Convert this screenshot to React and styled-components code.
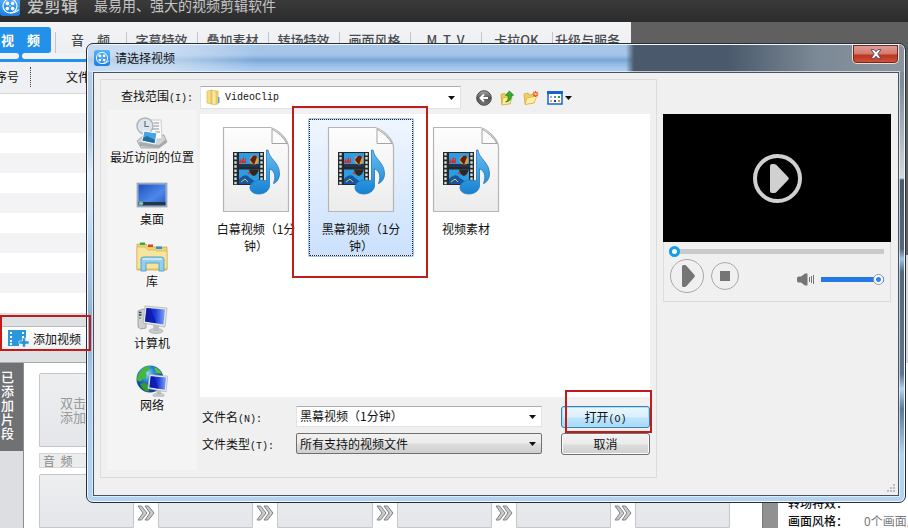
import React from "react";
import styled, { createGlobalStyle, css } from "styled-components";

const cjk = '"Noto Sans CJK SC", sans-serif';

const GlobalStyle = createGlobalStyle`
  *, *::before, *::after { box-sizing: border-box; }
  body { margin: 0; font-family: ${cjk}; font-size: 12px; color: #111; }
  button, input, select { font: inherit; color: inherit; margin: 0; padding: 0; }
  button { cursor: pointer; }
  svg { display: block; flex: none; }
`;

/* ---------- editor window ---------- */
const Editor = styled.div`
  position: relative;
  display: flex;
  flex-direction: column;
  height: 100vh;
  overflow: hidden;
  background: #fff;
`;
const Brand = styled.header`
  display: flex;
  align-items: flex-end;
  flex: none;
  height: 22px;
  padding-bottom: 6px;
  overflow: hidden;
  background: linear-gradient(#3a3a3a, #2b2b2b);
  color: #c4c4c4;
  line-height: 22px;
  white-space: nowrap;
`;
const BrandName = styled.strong`
  margin: 0 16px 0 7px;
  font-size: 17px;
  font-weight: 500;
`;
const Slogan = styled.span`font-size: 14px;`;
const Upper = styled.div`display: flex; flex: none;`;
const Library = styled.section`
  flex: 0 1 631px;
  min-width: 0;
  background: #eff0f3;
`;
const Stage = styled.div`
  flex: 1;
  background: linear-gradient(#606060 0 233px, #d8dade 233px);
`;
const TabBar = styled.nav`
  display: flex;
  height: 31px;
  padding-top: 5px;
  background: linear-gradient(#f3f4f6, #edeef1);
`;
const Tab = styled.button`
  flex: none;
  width: 71px;
  height: 26px;
  border: 0;
  background: linear-gradient(#c3c5c9, #c3c5c9) 0 5px / 1px 21px no-repeat;
  color: #4a4b4f;
  font-size: 13px;
  font-weight: 500;
  line-height: 26px;
  white-space: pre;
  text-align: center;
  ${(p) => p.$active && css`
    width: 51px;
    margin-right: 4px;
    padding-right: 10px;
    border-radius: 0 3px 3px 0;
    background: #2390ea;
    color: #fff;
    font-weight: 700;
  `}
`;
const TabStrip = styled.div`
  display: flex;
  gap: 3px;
  height: 9px;
  padding-bottom: 3px;
  background: #2390ea;
`;
const StripNotch = styled.i`
  flex: ${(p) => (p.$wide ? "1" : "0 0 19px")};
  border-radius: ${(p) => (p.$wide ? "4px 0 0 4px" : "0 4px 4px 0")};
  background: #f2f3f6;
`;
const ClipTable = styled.table`
  width: 100%;
  border-collapse: collapse;
  table-layout: fixed;
  background: #fff;
`;
const HeadCell = styled.th`
  width: ${(p) => (p.$first ? "31px" : "auto")};
  height: 31px;
  padding: 0 0 0 ${(p) => (p.$first ? "0" : "35px")};
  border-bottom: 1px solid #d4d6da;
  background: #eff0f3;
  font-weight: 400;
  text-align: left;
  text-indent: ${(p) => (p.$first ? "-5px" : "0")};
`;
const HeadText = styled.span`
  display: block;
  height: 20px;
  border-right: ${(p) => (p.$divider ? "1px dotted #444" : "0")};
  line-height: 20px;
`;
const ClipRow = styled.tr`
  height: 20px;
  background: ${(p) => (p.$odd ? "#f3f3f6" : "#fff")};
`;
const LibraryActions = styled.div`
  position: relative;
  height: 50px;
  padding: 13px 0 0 2px;
  border-bottom: 1px solid #a9abae;
  background: #dfe0e4;
`;
const AddVideo = styled.button`
  display: flex;
  align-items: center;
  gap: 4px;
  width: 90px;
  height: 25px;
  padding-left: 6px;
  border: 1px solid #b8babd;
  border-left: 0;
  background: linear-gradient(#fff, #f0f1f3);
  white-space: nowrap;
`;
const Lower = styled.div`display: flex; flex: 1; min-height: 0;`;
const SideTabs = styled.aside`
  width: 24px;
  flex: none;
  border-right: 1px solid #8d8e90;
  background: #dcdee2;
`;
const SideTab = styled.button`
  display: block;
  width: 23px;
  height: 88px;
  padding: 0 9px 4px 1px;
  border: 0;
  background: #707173;
  color: #fff;
  font-size: 13px;
  font-weight: 500;
  line-height: 14px;
  word-break: break-all;
`;
const Tray = styled.div`
  display: flex;
  flex-direction: column;
  flex: 0 1 738px;
  min-width: 0;
  padding: 10px 32px 0 15px;
`;
const slot = css`
  border: 1px solid #c4c6c9;
  border-radius: 2px 2px 0 0;
  background: linear-gradient(#eceef0, #e4e6e9);
`;
const ClipSlot = styled.div`
  ${slot}
  width: 95px;
  height: 74px;
  padding: 22px 0 0 20px;
  color: #999;
  font-size: 13px;
  line-height: 14px;
`;
const AudioLabel = styled.div`
  height: 15px;
  margin: 6px 0;
  padding-left: 3px;
  border: 1px solid #d6d6d6;
  background: #ececec;
  color: #888;
  line-height: 13px;
  white-space: pre;
`;
const AudioSlots = styled.div`display: flex; flex: 1; min-height: 0;`;
const AudioSlot = styled.div`${slot} flex: 1;`;
const Between = styled.div`
  display: flex;
  justify-content: center;
  flex: 0 0 24px;
  padding-top: 31px;
`;
const Splitter = styled.div`
  flex: 0 0 16px;
  border-left: 1px solid #777;
  background: #919191;
`;
const Info = styled.dl`
  display: grid;
  grid-template-columns: 76px 1fr;
  align-content: start;
  flex: 1;
  min-width: 0;
  margin: 0;
  padding: 131px 0 0 10px;
  line-height: 18px;
  white-space: nowrap;
`;
const InfoName = styled.dt`font-weight: 500;`;
const InfoValue = styled.dd`margin: 0; color: #777;`;

const Highlight = styled.span`
  position: absolute;
  z-index: 5;
  inset: ${(p) => p.$inset};
  width: ${(p) => p.$width || "auto"};
  border: 2px solid #c11b1b;
  pointer-events: none;
`;

/* ---------- dialog ---------- */
const Dialog = styled.div`
  position: absolute;
  z-index: 2;
  top: 43px;
  left: 86px;
  right: 2px;
  display: flex;
  flex-direction: column;
  padding: 0 6px 6px;
  border: 1px solid #23303a;
  border-radius: 7px;
  box-shadow: inset 0 0 0 1px #f2f8fc;
  background:
    linear-gradient(#8893a0, #7f8b97 40px, #d4d9dd 134px, #4c5b6c 136px, #566779 205px, #9cc3ec 215px, #54677c 228px, #60758c 330px, #b3d3f3 345px, #5c7896 365px, #b3d3f3 410px) right top / 8px 100% no-repeat,
    linear-gradient(#bcd2e8, #a8c6e6 90px, #e3eef8 130px, #b5d5f5 200px, #8eaed0 280px, #aacdf0 340px, #b2d3f4);
`;
const TitleBar = styled.header`
  display: flex;
  align-items: center;
  height: 27px;
  margin: 1px -5px 0;
  padding: 0 5px 1px 6px;
  border-radius: 5px 5px 0 0;
  background:
    linear-gradient(90deg, rgba(220,233,246,.6), rgba(225,236,248,.6) 80px, rgba(200,220,240,0) 170px, rgba(74,90,108,0) 538px, #4a5a6c 546px, #4a5a6c 640px, #7c8996 730px, #8b959f),
    linear-gradient(#a8c6e9, #a4c5e9 10px, #78a5d4 15px, #98bee6 20px, #b0d0f2);
`;
const Title = styled.h1`
  flex: 1;
  margin: 0 0 0 5px;
  padding-bottom: 2px;
  font-size: 12px;
  font-weight: 400;
`;
const CloseButton = styled.button`
  display: grid;
  place-items: center;
  align-self: flex-start;
  width: 47px;
  height: 19px;
  border: 1px solid #f1d9d5;
  border-top: 0;
  border-radius: 0 0 5px 5px;
  box-shadow: inset 0 0 0 1px #6d2a22;
  background: linear-gradient(#e1a198, #d4786b 9px, #b93521 10px, #d0563a);
`;
const Client = styled.div`
  display: flex;
  align-items: flex-start;
  gap: 6px;
  position: relative;
  padding: 6px 7px 17px 6px;
  border: 1px solid #46525e;
  background: #f0f0f0;
  box-shadow: 0 0 0 1px rgba(240, 247, 253, .7);
`;
const Browser = styled.form`
  display: grid;
  grid-template-columns: 90px minmax(0, 1fr);
  gap: 1px 3px;
  flex: 1;
  min-width: 0;
  padding: 6px 6px 7px;
  border: 1px solid #dcdcdc;
`;
const FieldLabel = styled.label`
  align-self: center;
  padding: ${(p) => (p.$end ? "0 4px 4px 0" : "0 0 2px 2px")};
  text-align: ${(p) => (p.$end ? "right" : "left")};
  white-space: nowrap;
`;
const Mono = styled.span`
  font-family: "Liberation Mono", monospace;
  font-size: 10px;
`;
const LookRow = styled.div`display: flex; align-items: center;`;
const Combo = styled.div`
  display: flex;
  align-items: center;
  gap: 4px;
  flex: ${(p) => (p.$look ? "0 1 261px" : "1")};
  min-width: 0;
  height: ${(p) => (p.$look ? "23px" : "21px")};
  padding: 0 5px 0 ${(p) => (p.$look ? "5px" : "3px")};
  border: 1px solid ${(p) => (p.$button ? "#707070" : "#dfe2e8")};
  border-top-color: ${(p) => (p.$button ? "#707070" : "#abadb3")};
  border-radius: ${(p) => (p.$button ? "2px" : "0")};
  background: ${(p) => (p.$button ? "linear-gradient(#f2f2f2, #ebebeb 9px, #dddddd 10px, #cfcfcf)" : "#fff")};
`;
const bareField = css`
  flex: 1;
  min-width: 0;
  height: 19px;
  border: 0;
  outline: 0;
  background: none;
  appearance: none;
`;
const ComboSelect = styled.select`
  ${bareField}
  ${(p) => p.$mono && css`font-family: "Liberation Mono", monospace; font-size: 10px;`}
`;
const ComboInput = styled.input`
  ${bareField}
  padding-bottom: 2px;
`;
const PlainButton = styled.button`
  display: flex;
  align-items: center;
  border: 0;
  background: none;
`;
const ViewTools = styled.div`
  display: flex;
  align-items: center;
  gap: 8px;
  margin-left: 15px;
`;
const ViewMode = styled(PlainButton)`gap: 2px;`;
const Places = styled.nav`
  display: flex;
  flex-direction: column;
  gap: 12px;
  padding: 7px 0 0;
  background: #f4f4f4;
`;
const Place = styled.button`
  display: flex;
  flex-direction: column;
  align-items: center;
  height: 50px;
  border: 0;
  background: none;
  line-height: 16px;
  white-space: nowrap;
`;
const FileArea = styled.div`padding: 4px 0 15px;`;
const FilePane = styled.div`
  display: flex;
  align-items: flex-start;
  gap: 1px;
  height: 283px;
  padding: 5px 4px;
  background: #fff;
`;
const FileItem = styled.button`
  position: relative;
  display: flex;
  flex-direction: column;
  align-items: center;
  gap: 7px;
  flex: none;
  width: 104px;
  height: 137px;
  padding: 6px 11px 0;
  border: 1px ${(p) => (p.$selected ? "dotted #222" : "solid transparent")};
  border-radius: ${(p) => (p.$selected ? "1px" : "0")};
  background: ${(p) => (p.$selected ? "linear-gradient(#eff6fe, #cbe1fc)" : "none")};
  box-shadow: ${(p) => (p.$selected ? "0 0 0 1px #9fc4ee" : "none")};
  line-height: 17px;
  text-align: center;
`;
const FormGrid = styled.div`
  display: grid;
  grid-template-columns: 96px minmax(0, 1fr) 89px;
  row-gap: 5px;
  margin-top: 9px;
`;
const FormCombo = styled(Combo)`margin-right: 19px;`;
const DialogButton = styled.button`
  position: relative;
  height: 22px;
  padding-bottom: 1px;
  border: 1px solid ${(p) => (p.$primary ? "#3c7fb1" : "#707070")};
  border-radius: 3px;
  box-shadow: inset 0 0 0 1px ${(p) => (p.$primary ? "#a8e0fa" : "#fbfbfb")};
  background: ${(p) => (p.$primary
    ? "linear-gradient(#eaf6fd, #d9f0fc 10px, #bee6fd 11px, #a7d9f5)"
    : "linear-gradient(#f2f2f2, #ebebeb 10px, #dddddd 11px, #cfcfcf)")};
`;
const Grip = styled.span`
  position: absolute;
  right: 2px;
  bottom: 2px;
`;

/* ---------- preview player ---------- */
const Player = styled.section`
  flex: 0 0 228px;
  margin-top: 35px;
  border: 1px solid #dcdcdc;
  border-top: 0;
`;
const Screen = styled.div`
  display: grid;
  place-items: center;
  height: 128px;
  margin: 0 -1px;
  background: #000;
`;
const SeekRow = styled.div`padding: 3px 6px 0 5px;`;
const Range = styled.input`
  display: block;
  appearance: none;
  width: 100%;
  height: 12px;
  background: linear-gradient(${(p) => p.$track}, ${(p) => p.$track}) center / 100% 5px no-repeat;
  border-radius: 3px;
  &::-webkit-slider-thumb {
    appearance: none;
    width: 11px;
    height: 11px;
    border: ${(p) => (p.$volume ? "1px solid #8e9aa6" : "3px solid #139ce8")};
    border-radius: 50%;
    background: ${(p) => (p.$volume ? "radial-gradient(#2b86ee 0 2px, #fff 3px)" : "#fff")};
  }
`;
const Controls = styled.div`
  display: flex;
  align-items: center;
  gap: 7px;
  padding: 2px 5px 8px 6px;
`;
const VolumeBox = styled.div`
  display: flex;
  align-items: center;
  gap: 6px;
  width: 87px;
  margin: 7px 1px 0 auto;
`;
const RoundButton = styled.button`
  display: grid;
  place-items: center;
  width: ${(p) => p.$size};
  height: ${(p) => p.$size};
  padding-left: ${(p) => p.$shift || "0"};
  border: ${(p) => p.$line || "1px solid #a8a8a8"};
  border-radius: 50%;
  background: none;
`;

/* ---------- drawings ---------- */
const ReelLogo = ({ size, id }) => (
  <svg width={size} height={size} viewBox="0 0 20 20" aria-hidden="true">
    <defs>
      <linearGradient id={id} x1="0" y1="0" x2="0" y2="1">
        <stop offset="0" stopColor="#58b4f6" /><stop offset="1" stopColor="#1c7de4" />
      </linearGradient>
    </defs>
    <rect width="20" height="20" rx="3" fill={`url(#${id})`} />
    <circle cx="10" cy="10" r="7" fill="none" stroke="#fff" strokeWidth="1.2" />
    <g fill="#fff">
      <circle cx="7.4" cy="7.4" r="1.8" /><circle cx="12.6" cy="7.4" r="1.8" />
      <circle cx="7.4" cy="12.6" r="1.8" /><circle cx="12.6" cy="12.6" r="1.8" /><circle cx="10" cy="10" r=".7" />
    </g>
    <path d="M10 17 Q15 17.400 18.800 13.600" fill="none" stroke="#fff" strokeWidth="1.1" />
  </svg>
);
const Caret = () => (
  <svg width="7" height="4" viewBox="0 0 7 4" aria-hidden="true"><path d="M0 0H7L3.5 4Z" fill="#111" /></svg>
);
const AddVideoIcon = () => (
  <svg width="21" height="17" viewBox="0 0 21 17" aria-hidden="true">
    <path d="M0 0H18V9H14V12H11V16H0Z" fill="#2b97dd" />
    <path d="M2 2h2v2H2zM2 6h2v2H2zM2 10h2v2H2zM2 13h2v2H2zM14 2h2v2h-2zM14 6h2v2h-2z" fill="#fff" />
    <path d="M14.500 8h3v3H21v3h-3.500v3h-3v-3H11v-3h3.500z" fill="#2b8fd4" stroke="#e8f4fc" strokeWidth=".6" />
  </svg>
);
const Chevrons = () => (
  <svg width="18" height="16" viewBox="0 0 18 16" aria-hidden="true">
    <g fill="#c9cacb" stroke="#7e8082">
      <path d="M1 1H4.500L10 8 4.500 15H1L6 8Z" /><path d="M8 1H11.500L17 8 11.500 15H8L13 8Z" />
    </g>
  </svg>
);
const CloseGlyph = () => (
  <svg width="12" height="10" viewBox="0 0 12 10" aria-hidden="true">
    <path d="M1 .7H4.200L6 2.800 7.800 .7H11L7.800 5 11 9.300H7.800L6 7.200 4.200 9.300H1L4.200 5Z" fill="#fff" stroke="#4b4f66" strokeWidth="1" />
  </svg>
);
const FolderIcon = () => (
  <svg width="15" height="17" viewBox="0 0 15 17" aria-hidden="true">
    <path d="M1 2 6 1V15L1 14Z" fill="#f6df83" stroke="#d9b84f" strokeWidth=".7" />
    <path d="M5 2H12V15H5Z" fill="#f2d26a" stroke="#d9b84f" strokeWidth=".7" />
    <path d="M6 1 10 2.500V16L6 15Z" fill="#fae9a1" stroke="#dcbf5e" strokeWidth=".7" />
    <path d="M12 8h1.500v6H12z" fill="#5ba7dc" />
  </svg>
);
const BackIcon = () => (
  <svg width="16" height="16" viewBox="0 0 16 16" aria-hidden="true">
    <defs><linearGradient id="back" x1="0" y1="0" x2="0" y2="1"><stop stopColor="#aaa" /><stop offset=".5" stopColor="#555" /><stop offset="1" stopColor="#777" /></linearGradient></defs>
    <circle cx="8" cy="8" r="7.300" fill="url(#back)" stroke="#4a4a4a" />
    <path d="M12 8H5M8 4.500 4.500 8 8 11.500" fill="none" stroke="#fff" strokeWidth="2" />
  </svg>
);
const UpIcon = () => (
  <svg width="15" height="16" viewBox="0 0 16 16" aria-hidden="true">
    <path d="M1 4 5 3 6 5 11 4V14L2 15Z" fill="#f2ca53" stroke="#c39a2a" strokeWidth=".7" />
    <path d="M3 8 13 6 11 14 2 15.500Z" fill="#fdec9c" stroke="#cfa83a" strokeWidth=".7" />
    <path d="M6 12C9 11 9 8 8.500 5H6L10 .6 14.500 5H12C12.500 9 10.500 12 6 12Z" fill="#34b22c" stroke="#14761a" strokeWidth=".8" />
  </svg>
);
const NewFolderIcon = () => (
  <svg width="16" height="16" viewBox="0 0 16 16" aria-hidden="true">
    <path d="M1 4 5 3 6 5 11 4V13L2 14Z" fill="#f4cf5f" stroke="#c9a037" strokeWidth=".7" />
    <path d="M4 8 14 6 11 13 2 14.500Z" fill="#feeea8" stroke="#d2ac42" strokeWidth=".7" />
    <path d="M12.500 1V7M9.500 4H15.500M10.300 1.900 14.700 6.100M14.700 1.900 10.300 6.100" stroke="#ee4b22" strokeWidth="1.100" />
    <circle cx="12.500" cy="4" r="1.200" fill="#ffd77c" />
  </svg>
);
const ViewIcon = () => (
  <svg width="16" height="14" viewBox="0 0 16 14" aria-hidden="true">
    <path d="M1 1H15V13H1Z" fill="#fff" stroke="#1563cf" strokeWidth="1.500" /><path d="M0 0H16V3H0Z" fill="#1563cf" />
    <path d="M3 5h2v2H3z" fill="#9bb6cf" /><path d="M7 5h2v2H7z" fill="#5a87bd" /><path d="M11 5h2v2h-2z" fill="#2c9d47" />
    <path d="M3 9h2v2H3z" fill="#e79b73" /><path d="M7 9h2v2H7z" fill="#1a3fa8" /><path d="M11 9h2v2h-2z" fill="#c79e22" />
  </svg>
);
const Monitor = ({ id }) => (
  <g>
    <ellipse cx="20" cy="28" rx="7" ry="2.500" fill="#c9ccd0" stroke="#9fa3a8" strokeWidth=".6" />
    <path d="M17 22 23 23V28H18Z" fill="#b9bdc2" />
    <path d="M9 3 31 5 29 24 7 20Z" fill="#e6e8ea" stroke="#a5a9ae" strokeWidth=".7" />
    <path d="M10.500 5 29 6.500 27.500 21.500 9 18.500Z" fill={`url(#${id})`} />
    <path d="M10.500 5 15 5.400 20 20.300 9 18.500Z" fill="#0716a0" opacity=".65" />
    <defs><linearGradient id={id}><stop stopColor="#1424bd" /><stop offset=".5" stopColor="#1c36da" /><stop offset="1" stopColor="#7fa8f5" /></linearGradient></defs>
  </g>
);
const placeArt = {
  recent: (
    <>
      <path d="M1 24 8 18H28L31 25 23 31H5Z" fill="#d2d4d6" stroke="#8f9396" strokeWidth=".7" />
      <path d="M3 25 23 28 30 22V26L23 31 4 29Z" fill="#a7abae" />
      <path d="M12 3H25L26 22H12Z" fill="#fbfbfb" stroke="#b9bcc0" strokeWidth=".7" />
      <path d="M18 6h5M18 9h5M14 12h9M19 15h5" stroke="#8b8f94" />
      <circle cx="9" cy="9" r="8" fill="#dfe6eb" stroke="#a9b4bd" strokeWidth="1.500" />
      <path d="M9 4V9.500H13" fill="none" stroke="#5e7382" strokeWidth="1.200" />
      <path d="M8 14 21 16 19 27 6 24Z" fill="#4aa2e4" stroke="#fff" />
      <path d="M7 21 11 19 19 23 18.500 26 6.500 23.500Z" fill="#1d6f9e" />
    </>
  ),
  desktop: (
    <>
      <defs><linearGradient id="desk" x1="0" y1="0" x2="1" y2="1"><stop stopColor="#1f50c0" /><stop offset=".6" stopColor="#4d88e8" /><stop offset="1" stopColor="#2b5fc4" /></linearGradient></defs>
      <rect x="1" y="4" width="30" height="24" fill="#a3b4c9" stroke="#8191a6" strokeWidth=".6" />
      <rect x="2.500" y="5.500" width="27" height="20" fill="url(#desk)" />
      <rect x="2.500" y="23" width="27" height="3.500" fill="#21364f" />
      <circle cx="5" cy="24.500" r="2.300" fill="#3eb2c8" /><path d="M5 22.500v4M3 24.500h4" stroke="#f2c23a" strokeWidth=".7" />
    </>
  ),
  library: (
    <>
      <path d="M1 3H10L12 6H31V29H1Z" fill="#eed37c" stroke="#c7a446" strokeWidth=".7" />
      <path d="M4 1.500H9V4H4Z" fill="#2eae3a" /><path d="M12 3.500H17V6H12Z" fill="#d24a28" /><path d="M20 5.500H26V8H20Z" fill="#2c8fd8" />
      <path d="M1 6H9L12 9H19L21 10H31V28H1Z" fill="#f9e49b" stroke="#d3b253" strokeWidth=".7" />
      <path d="M5 18Q5 16 8 16H25Q28 16 28 18V30H23V22H10V30H5Z" fill="#94cfee" stroke="#4c9ecb" strokeWidth=".9" />
      <path d="M6.500 18H26" stroke="#d9f0fb" strokeWidth="1.500" />
    </>
  ),
  computer: (
    <>
      <path d="M2 8 7 6 10 7V25L5 26 2 24Z" fill="#cfd2d5" stroke="#85898e" strokeWidth=".7" />
      <path d="M3 9.500H5.500M3 12H5.500" stroke="#3b3f45" strokeWidth="1.300" /><circle cx="4" cy="15" r="1" fill="#4fbd3b" />
      <Monitor id="pcScreen" />
    </>
  ),
  network: (
    <>
      <defs><radialGradient id="globe" cx=".4" cy=".3"><stop stopColor="#9bdcf8" /><stop offset=".5" stopColor="#2d8bd6" /><stop offset="1" stopColor="#0d4796" /></radialGradient></defs>
      <circle cx="14" cy="14" r="13.500" fill="url(#globe)" />
      <path d="M3 8Q8 1 14 1Q14 5 10 7Q12 12 7 14Q4 18 1 15Q1 11 3 8Z" fill="#47b738" /><path d="M18 2Q24 4 26 9L20 8Z" fill="#56bf42" />
      <path d="M4 19Q10 16 13 21Q14 25 12 27Q6 25 4 19Z" fill="#2f9d2f" />
      <g transform="translate(6 7) scale(.83)"><Monitor id="netScreen" /></g>
    </>
  ),
};
const MediaFileIcon = ({ id }) => (
  <svg width="68" height="87" viewBox="0 0 68 87" aria-hidden="true">
    <defs>
      <linearGradient id={`${id}p`} x1="0" y1="0" x2="0" y2="1"><stop stopColor="#fdfdfd" /><stop offset="1" stopColor="#ececec" /></linearGradient>
      <linearGradient id={`${id}n`} x1="0" y1="0" x2="0" y2="1"><stop stopColor="#66bdf2" /><stop offset="1" stopColor="#1582d2" /></linearGradient>
    </defs>
    <path d="M1.500 1.500H48Q53 2 60 9Q66 15 66.500 21V85.500H1.500Z" fill={`url(#${id}p)`} stroke="#b5b5b5" strokeWidth="1.200" />
    <path d="M50 3V17.500H65Q60 9 50 3Z" fill="#fbfbfb" stroke="#a4a4a4" />
    <rect x="11" y="26" width="31" height="33" fill="#242a2b" />
    <path d="M13.500 27V59M39.500 27V59" stroke="#d9dfdc" strokeWidth="2.400" strokeDasharray="2.500 1.600" />
    <path d="M17 27H37V41H17ZM17 43.500H37V58H17Z" fill="#2e9ce2" />
    <path d="M17 36l2-4v4l3-6v6l2-5v6H17z" fill="#d72f28" /><path d="M17 38H37V41H17Z" fill="#203456" />
    <circle cx="32" cy="34" r="4.500" fill="#e2a02f" /><path d="M28 34Q32 27 35 31L32 39Z" fill="#5d2019" />
    <path d="M27 43.500H37Q35 49 32 50Q28 49 27 43.500Z" fill="#32261f" /><circle cx="27" cy="47" r="1.200" fill="#dc3827" />
    <path d="M17 53Q24 46 28 52L37 58H17Z" fill="#1557a7" /><path d="M19 56l4-3 3 3" stroke="#e9c63d" fill="none" />
    <path
      d="M44.500 24H46C47 33 57.500 36 57.500 48C57.500 53 54 57 51.500 57.500C54.500 50 52 44 47.500 43V60C47 65 42 68 37 68C31 68 28 65 28 61.500C28 57 33 54 39 54C41 54 43 54.500 44.500 55Z"
      fill={`url(#${id}n)`} stroke="#2279b7" strokeWidth=".8"
    />
  </svg>
);
const PlayShape = ({ w, h, fill }) => (
  <svg width={w} height={h} viewBox="0 0 19 29" preserveAspectRatio="none" aria-hidden="true">
    <path d="M0 2Q0 0 2 0H4Q6 0 7 1.500L18 13Q19.500 14.500 18 16L7 27.500Q6 29 4 29H2Q0 29 0 27Z" fill={fill} />
  </svg>
);

const tabs = ["音\u3000频", "字幕特效", "叠加素材", "转场特效", "画面风格", "M  T  V", "卡拉OK", "升级与服务"];
const places = [
  ["recent", "最近访问的位置"], ["desktop", "桌面"], ["library", "库"], ["computer", "计算机"], ["network", "网络"],
];
const files = ["白幕视频（1分钟）", "黑幕视频（1分钟）", "视频素材"];

function EditorShell() {
  return (
    <>
      <Brand>
        <ReelLogo size={20} id="brandLogo" />
        <BrandName>爱剪辑</BrandName>
        <Slogan>最易用、强大的视频剪辑软件</Slogan>
      </Brand>
      <Upper>
        <Library>
          <TabBar>
            <Tab $active>{"视\u3000频"}</Tab>
            {tabs.map((t) => <Tab key={t}>{t}</Tab>)}
          </TabBar>
          <TabStrip><StripNotch /><StripNotch $wide /></TabStrip>
          <ClipTable>
            <thead>
              <tr>
                <HeadCell $first><HeadText $divider>序号</HeadText></HeadCell>
                <HeadCell><HeadText>文件</HeadText></HeadCell>
              </tr>
            </thead>
            <tbody>
              {Array.from({ length: 11 }, (_, i) => (
                <ClipRow key={i} $odd={i % 2 === 1}><td /><td /></ClipRow>
              ))}
            </tbody>
          </ClipTable>
          <LibraryActions>
            <AddVideo><AddVideoIcon />添加视频</AddVideo>
            <Highlight $inset="2px auto 11px 0" $width="91px" />
          </LibraryActions>
        </Library>
        <Stage />
      </Upper>
      <Lower>
        <SideTabs><SideTab>已添加片段</SideTab></SideTabs>
        <Tray>
          <ClipSlot>双击<br />添加</ClipSlot>
          <AudioLabel>{"音  频"}</AudioLabel>
          <AudioSlots>
            {[0, 1, 2, 3, 4].map((n) => (
              <React.Fragment key={n}><AudioSlot /><Between><Chevrons /></Between></React.Fragment>
            ))}
            <AudioSlot />
          </AudioSlots>
        </Tray>
        <Splitter />
        <Info>
          <InfoName>转场特效：</InfoName><InfoValue />
          <InfoName>画面风格：</InfoName><InfoValue>0个画面风格</InfoValue>
        </Info>
      </Lower>
    </>
  );
}

function OpenDialog() {
  return (
    <Dialog role="dialog" aria-labelledby="dialog-title">
      <TitleBar>
        <ReelLogo size={16} id="dialogLogo" />
        <Title id="dialog-title">请选择视频</Title>
        <CloseButton aria-label="关闭"><CloseGlyph /></CloseButton>
      </TitleBar>
      <Client>
        <Browser onSubmit={(e) => e.preventDefault()}>
          <FieldLabel $end htmlFor="look-in">查找范围<Mono>(I):</Mono></FieldLabel>
          <LookRow>
            <Combo $look>
              <FolderIcon />
              <ComboSelect id="look-in" $mono><option>VideoClip</option></ComboSelect>
              <Caret />
            </Combo>
            <ViewTools>
              <PlainButton type="button" aria-label="后退"><BackIcon /></PlainButton>
              <PlainButton type="button" aria-label="向上一级"><UpIcon /></PlainButton>
              <PlainButton type="button" aria-label="新建文件夹"><NewFolderIcon /></PlainButton>
              <ViewMode type="button" aria-label="查看方式"><ViewIcon /><Caret /></ViewMode>
            </ViewTools>
          </LookRow>
          <Places>
            {places.map(([key, label]) => (
              <Place key={key} type="button">
                <svg width="32" height="32" viewBox="0 0 32 32" aria-hidden="true">{placeArt[key]}</svg>
                {label}
              </Place>
            ))}
          </Places>
          <FileArea>
            <FilePane>
              {files.map((name, i) => (
                <FileItem key={name} type="button" $selected={i === 1}>
                  <MediaFileIcon id={`file${i}`} />
                  {name}
                  {i === 1 && <Highlight $inset="-14px -16px -23px -18px" />}
                </FileItem>
              ))}
            </FilePane>
            <FormGrid>
              <FieldLabel htmlFor="file-name">文件名<Mono>(N):</Mono></FieldLabel>
              <FormCombo>
                <ComboInput id="file-name" defaultValue="黑幕视频（1分钟）" />
                <PlainButton type="button" aria-label="历史记录"><Caret /></PlainButton>
              </FormCombo>
              <DialogButton type="submit" $primary>
                打开<Mono>(O)</Mono>
                <Highlight $inset="-17px -3px -6px 3px" />
              </DialogButton>
              <FieldLabel htmlFor="file-type">文件类型<Mono>(T):</Mono></FieldLabel>
              <FormCombo $button>
                <ComboSelect id="file-type"><option>所有支持的视频文件</option></ComboSelect>
                <Caret />
              </FormCombo>
              <DialogButton type="button">取消</DialogButton>
            </FormGrid>
          </FileArea>
        </Browser>
        <Player>
          <Screen>
            <RoundButton $size="49px" $line="4px solid #d0d0d0" $shift="5px" aria-label="播放预览">
              <PlayShape w={19} h={29} fill="#d0d0d0" />
            </RoundButton>
          </Screen>
          <SeekRow><Range type="range" aria-label="进度" defaultValue="0" $track="#c9cacc" /></SeekRow>
          <Controls>
            <RoundButton $size="34px" $shift="3px" aria-label="播放"><PlayShape w={13} h={22} fill="#757575" /></RoundButton>
            <RoundButton $size="28px" aria-label="停止">
              <svg width="10" height="10" aria-hidden="true"><rect width="10" height="10" fill="#757575" /></svg>
            </RoundButton>
            <VolumeBox>
              <svg width="18" height="13" viewBox="0 0 18 13" aria-hidden="true">
                <path d="M0 5Q0 3.500 2 3.500H4L8 .5H10.500V12.500H8L4 9.500H2Q0 9.500 0 8Z" fill="#757575" />
                <path d="M12.500 4V9M14.500 3V10M16.500 2V11" stroke="#757575" />
              </svg>
              <Range type="range" aria-label="音量" defaultValue="100" $volume $track="#2479e8" />
            </VolumeBox>
          </Controls>
        </Player>
        <Grip>
          <svg width="9" height="9" viewBox="0 0 9 9" aria-hidden="true">
            <path d="M6 0h2v2H6zM3 3h2v2H3zM6 3h2v2H6zM0 6h2v2H0zM3 6h2v2H3zM6 6h2v2H6z" fill="#bdbdbd" />
          </svg>
        </Grip>
      </Client>
    </Dialog>
  );
}

export default function App() {
  return (
    <>
      <GlobalStyle />
      <Editor>
        <EditorShell />
        <OpenDialog />
      </Editor>
    </>
  );
}
